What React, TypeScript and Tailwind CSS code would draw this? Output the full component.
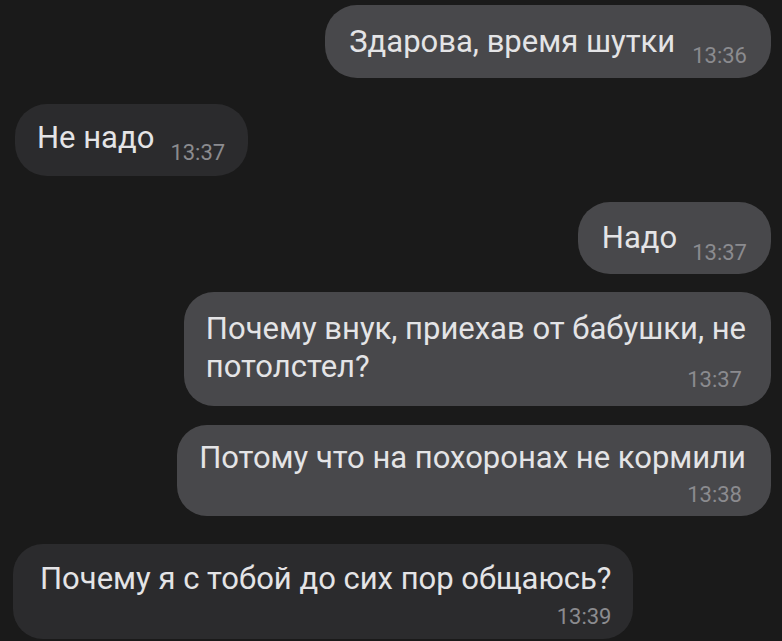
import React from "react";

const font = { fontFamily: "Roboto, 'Noto Sans', sans-serif" };

export default function App() {
  return (
    <div
      className="w-[782px] h-[641px] overflow-hidden bg-[#1a1a1a] flex flex-col text-[#e4e4e6]"
      style={font}
    >
      {/* 1 */}
      <div className="mt-[5px] self-end mr-[11px] rounded-[32px] bg-[#48484b] pl-6 pr-6 pt-[18px] pb-[17px] flex items-baseline">
        <span className="text-[31px] leading-[38px]">Здарова, время шутки</span>
        <span className="ml-[17px] text-[22px] leading-[21px] text-[#8b8b8f] translate-y-[11px]">13:36</span>
      </div>

      {/* 2 */}
      <div className="mt-[26px] self-start ml-[15px] rounded-[32px] bg-[#2b2b2d] pl-[22px] pr-[23px] pt-[15px] pb-[19px] flex items-baseline">
        <span className="text-[31px] leading-[38px]">Не надо</span>
        <span className="ml-[16px] text-[22px] leading-[21px] text-[#8b8b8f] translate-y-[12px]">13:37</span>
      </div>

      {/* 3 */}
      <div className="mt-[26px] self-end mr-[11px] rounded-[32px] bg-[#48484b] pl-6 pr-6 pt-[17px] pb-[17px] flex items-baseline">
        <span className="text-[31px] leading-[38px]">Надо</span>
        <span className="ml-[15px] text-[22px] leading-[21px] text-[#8b8b8f] translate-y-[12px]">13:37</span>
      </div>

      {/* 4 */}
      <div className="mt-[18px] self-end mr-[11px] rounded-[30px] bg-[#48484b] pl-[22px] pr-[25px] pt-[18px] pb-[20px] flex flex-col">
        <span className="text-[31px] leading-[38px] whitespace-nowrap">Почему внук, приехав от бабушки, не</span>
        <div className="flex items-baseline justify-between">
          <span className="text-[31px] leading-[38px]">потолстел?</span>
          <span className="mr-[4px] text-[22px] leading-[21px] text-[#8b8b8f] translate-y-[10px]">13:37</span>
        </div>
      </div>

      {/* 5 */}
      <div className="mt-[19px] self-end mr-[11px] rounded-[30px] bg-[#48484b] pl-[22px] pr-[25px] pt-[14px] pb-[11px] flex flex-col">
        <span className="text-[31px] leading-[38px] whitespace-nowrap">Потому что на похоронах не кормили</span>
        <span className="self-end mt-[7px] mr-[4px] text-[22px] leading-[21px] text-[#8b8b8f]">13:38</span>
      </div>

      {/* 6 */}
      <div className="mt-[28px] self-start ml-[13px] rounded-[30px] bg-[#2b2b2d] pl-[27px] pr-[22px] pt-[16px] pb-[12px] flex flex-col">
        <span className="text-[31px] leading-[38px] whitespace-nowrap">Почему я с тобой до сих пор общаюсь?</span>
        <span className="self-end mt-[8px] text-[22px] leading-[21px] text-[#8b8b8f]">13:39</span>
      </div>
    </div>
  );
}
